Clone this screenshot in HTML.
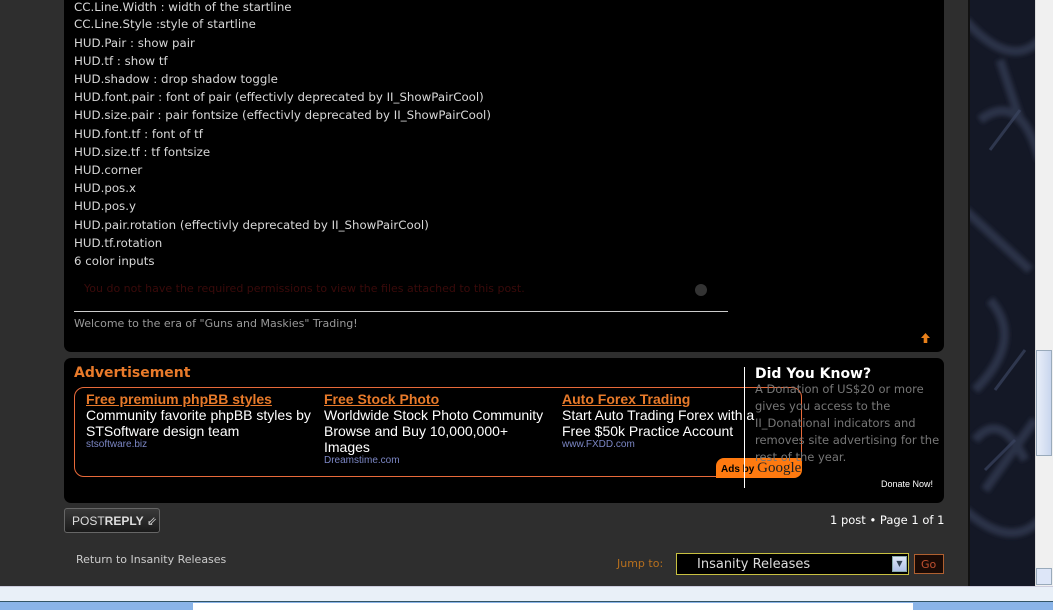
<!DOCTYPE html>
<html><head><meta charset="utf-8">
<style>
*{margin:0;padding:0;box-sizing:border-box}
body{width:1053px;height:610px;overflow:hidden;background:#2e2e2e;font-family:"DejaVu Sans","Liberation Sans",sans-serif;position:relative}
.abs{position:absolute}
#post{left:64px;top:-10px;width:880px;height:362px;background:#000;border-radius:0 0 7px 7px}
.ln{position:absolute;left:74px;font-size:11.8px;color:#d8d8d8;white-space:nowrap}
#ad{left:64px;top:358px;width:880px;height:145px;background:#000;border-radius:7px}
.ah{font-family:"Liberation Sans",sans-serif;color:#e87a2a;font-weight:bold;font-size:14px;text-decoration:underline}
.at{font-family:"Liberation Sans",sans-serif;color:#fff;font-size:14px;line-height:16px}
.au{font-family:"Liberation Sans",sans-serif;color:#7b86c4;font-size:10px}
</style></head><body>
<div id="post" class="abs"></div>
<div class="ln" style="top:0px">CC.Line.Width : width of the startline</div>
<div class="ln" style="top:17px">CC.Line.Style :style of startline</div>
<div class="ln" style="top:36px">HUD.Pair : show pair</div>
<div class="ln" style="top:54px">HUD.tf : show tf</div>
<div class="ln" style="top:72px">HUD.shadow : drop shadow toggle</div>
<div class="ln" style="top:90px">HUD.font.pair : font of pair (effectivly deprecated by II_ShowPairCool)</div>
<div class="ln" style="top:108px">HUD.size.pair : pair fontsize (effectivly deprecated by II_ShowPairCool)</div>
<div class="ln" style="top:127px">HUD.font.tf : font of tf</div>
<div class="ln" style="top:145px">HUD.size.tf : tf fontsize</div>
<div class="ln" style="top:163px">HUD.corner</div>
<div class="ln" style="top:181px">HUD.pos.x</div>
<div class="ln" style="top:199px">HUD.pos.y</div>
<div class="ln" style="top:218px">HUD.pair.rotation (effectivly deprecated by II_ShowPairCool)</div>
<div class="ln" style="top:236px">HUD.tf.rotation</div>
<div class="ln" style="top:254px">6 color inputs</div>
<div class="ln" style="top:282px;left:84px;color:#3a0a0a;font-size:11px">You do not have the required permissions to view the files attached to this post.</div>
<div class="abs" style="left:695px;top:284px;width:12px;height:12px;border-radius:6px;background:#333"></div>
<div class="abs" style="left:74px;top:311px;width:654px;height:1px;background:#ccc"></div>
<div class="ln" style="top:317px;font-size:11px;color:#999">Welcome to the era of "Guns and Maskies" Trading!</div>
<div class="abs" style="left:921px;top:333px;width:9px;height:10px;background:#e8801a;clip-path:polygon(50% 0,100% 50%,70% 50%,70% 100%,30% 100%,30% 50%,0 50%)"></div>

<div id="ad" class="abs"></div>
<div class="abs" style="left:74px;top:365px;font-size:14px;font-weight:bold;color:#e87a2a">Advertisement</div>
<div class="abs" style="left:74px;top:387px;width:728px;height:90px;border:1px solid #e86a3a;border-radius:10px"></div>
<div class="abs" style="left:86px;top:391px"><div class="ah">Free premium phpBB styles</div><div class="at">Community favorite phpBB styles by<br>STSoftware design team</div><div class="au">stsoftware.biz</div></div>
<div class="abs" style="left:324px;top:391px"><div class="ah">Free Stock Photo</div><div class="at">Worldwide Stock Photo Community<br>Browse and Buy 10,000,000+<br>Images</div><div class="au">Dreamstime.com</div></div>
<div class="abs" style="left:562px;top:391px"><div class="ah">Auto Forex Trading</div><div class="at" style="white-space:nowrap">Start Auto Trading Forex with a<br>Free $50k Practice Account</div><div class="au">www.FXDD.com</div></div>
<div class="abs" style="left:716px;top:458px;width:86px;height:20px;background:#ff7a10;border-radius:8px 0 8px 0;font-family:'Liberation Sans',sans-serif;font-size:10px;color:#000;font-weight:bold;padding:2px 0 0 5px">Ads by <span style="font-family:'Liberation Serif',serif;font-size:15px;font-weight:normal;color:#222">Google</span></div>
<div class="abs" style="left:744px;top:367px;width:1px;height:121px;background:#fff"></div>
<div class="abs" style="left:755px;top:366px;font-size:14px;font-weight:bold;color:#fff">Did You Know?</div>
<div class="abs" style="left:755px;top:381px;width:185px;font-size:11.5px;line-height:17px;color:#777">A Donation of US$20 or more gives you access to the II_Donational indicators and removes site advertising for the rest of the year.</div>
<div class="abs" style="left:881px;top:479px;font-family:'Liberation Sans',sans-serif;font-size:9px;color:#fff">Donate Now!</div>

<div class="abs" style="left:64px;top:508px;width:96px;height:25px;border:1px solid #666;border-radius:3px;background:linear-gradient(#3a3a3a,#1a1a1a);font-family:'Liberation Sans',sans-serif;font-size:12px;color:#ddd;padding:5px 0 0 7px">POST<b>REPLY</b> ⇙</div>
<div class="abs" style="left:830px;top:513px;font-size:11.5px;color:#fff">1 post • Page 1 of 1</div>
<div class="abs" style="left:76px;top:553px;font-size:11px;color:#ccc">Return to Insanity Releases</div>
<div class="abs" style="left:617px;top:557px;font-size:11px;color:#b8701e">Jump to:</div>
<div class="abs" style="left:676px;top:553px;width:233px;height:22px;border:1px solid #c8c040;background:#000;color:#ddd;font-size:13px;padding:3px 0 0 20px">Insanity Releases</div>
<div class="abs" style="left:892px;top:556px;width:15px;height:16px;background:linear-gradient(#dde6f8,#b0c2e8);border:1px solid #8aa;font-size:8px;color:#345;text-align:center;line-height:14px">▼</div>
<div class="abs" style="left:914px;top:554px;width:30px;height:20px;border:1px solid #b06030;background:#1a0a05;color:#c05030;font-size:11px;padding:3px 0 0 6px">Go</div>

<div class="abs" style="left:968px;top:0;width:2px;height:586px;background:#111"></div>
<div class="abs" style="left:970px;top:0;width:65px;height:586px;background:#141826;overflow:hidden">
<svg width="65" height="586"><defs><filter id="b"><feGaussianBlur stdDeviation="2"/></filter></defs><g stroke="#2c3346" stroke-width="9" fill="none" filter="url(#b)">
<path d="M-5 20 Q40 70 70 40"/><path d="M10 120 Q50 90 70 160"/><path d="M-5 210 L60 270"/><path d="M20 300 Q55 340 5 390"/><path d="M65 420 L15 490"/><path d="M-5 510 Q40 550 70 520"/><path d="M30 60 L50 120"/><path d="M5 440 Q30 410 55 460"/></g>
<g stroke="#3a4460" stroke-width="3" fill="none" opacity=".7"><path d="M20 150 L50 110"/><path d="M25 390 L55 350"/><path d="M15 470 L45 440"/></g></svg></div>
<div class="abs" style="left:1035px;top:0;width:18px;height:586px;background:#f0f0f0;border-left:1px solid #ddd"></div>
<div class="abs" style="left:1036px;top:350px;width:16px;height:106px;background:linear-gradient(90deg,#e8eef8,#c9d6ee);border:1px solid #9ab"></div>
<div class="abs" style="left:1036px;top:568px;width:16px;height:17px;background:#dde6f8;border:1px solid #9ab"></div>
<div class="abs" style="left:0;top:586px;width:1053px;height:15px;background:#e9f0f8;border-top:1px solid #ccd"></div>
<div class="abs" style="left:0;top:601px;width:1053px;height:9px;background:#8ab4e8;border-top:1px solid #356"></div>
<div class="abs" style="left:193px;top:603px;width:720px;height:7px;background:#fff"></div>
</body></html>
